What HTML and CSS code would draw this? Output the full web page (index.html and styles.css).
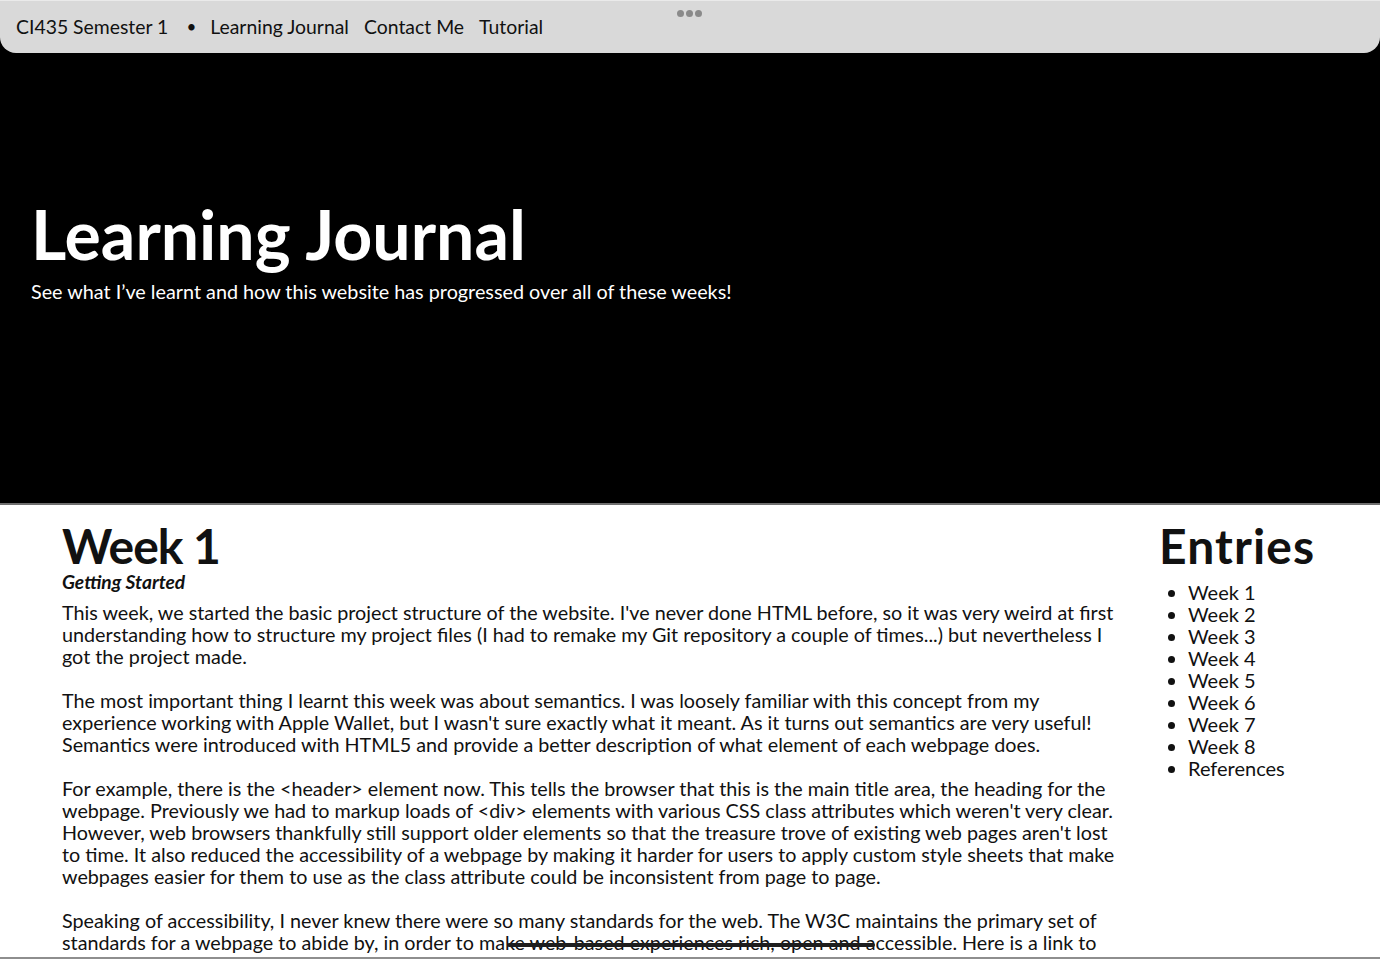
FILE: index.html
```html
<!DOCTYPE html>
<html lang="en">
<head>
<meta charset="utf-8">
<title>Learning Journal</title>
<link rel="stylesheet" href="styles.css">
</head>
<body>
<div class="frame">
  <header class="hero">
    <nav class="topbar">
      <span class="site">CI435 Semester 1</span>
      <span class="dot">&#8226;</span>
      <a href="#">Learning Journal</a>
      <a href="#">Contact Me</a>
      <a href="#">Tutorial</a>
      <span class="handle"><i></i><i></i><i></i></span>
    </nav>
    <div class="hero-text">
      <h1>Learning Journal</h1>
      <p>See what I’ve learnt and how this website has progressed over all of these weeks!</p>
    </div>
  </header>
  <div class="content">
    <main class="entry">
      <h2>Week 1</h2>
      <h3>Getting Started</h3>
      <p>This week, we started the basic project structure of the website. I've never done HTML before, so it was very weird at first understanding how to structure my project files (I had to remake my Git repository a couple of times...) but nevertheless I got the project made.</p>
      <p>The most important thing I learnt this week was about semantics. I was loosely familiar with this concept from my experience working with Apple Wallet, but I wasn't sure exactly what it meant. As it turns out semantics are very useful! Semantics were introduced with HTML5 and provide a better description of what element of each webpage does.</p>
      <p>For example, there is the &lt;header&gt; element now. This tells the browser that this is the main title area, the heading for the webpage. Previously we had to markup loads of &lt;div&gt; elements with various CSS class attributes which weren't very clear. However, web browsers thankfully still support older elements so that the treasure trove of existing web pages aren't lost to time. It also reduced the accessibility of a webpage by making it harder for users to apply custom style sheets that make webpages easier for them to use as the class attribute could be inconsistent from page to page.</p>
      <p>Speaking of accessibility, I never knew there were so many standards for the web. The W3C maintains the primary set of standards for a webpage to abide by, in order to make web-based experiences rich, open and accessible. Here is a link to their website.</p>
    </main>
    <aside class="entries">
      <h2>Entries</h2>
      <ul>
        <li>Week 1</li>
        <li>Week 2</li>
        <li>Week 3</li>
        <li>Week 4</li>
        <li>Week 5</li>
        <li>Week 6</li>
        <li>Week 7</li>
        <li>Week 8</li>
        <li>References</li>
      </ul>
    </aside>
  </div>
  <span class="smudge"></span>
</div>
</body>
</html>
```
FILE: styles.css
```css
html, body {
  margin: 0;
  padding: 0;
  background: #fff;
}
body {
  font-family: Lato, "Open Sans", sans-serif;
  color: #111;
  overflow: hidden;
}
.frame {
  width: 1380px;
  height: 957px;
  overflow: hidden;
  border-bottom: 2px solid #8e8e8e;
  position: relative;
}
.hero {
  background: #000;
  color: #fff;
  height: 503px;
  border-bottom: 2px solid #6f6f6f;
  display: flex;
  flex-direction: column;
}
.topbar {
  background: #d9d9d9;
  height: 53px;
  flex: none;
  border-top: 1px solid #eaeaea;
  box-sizing: border-box;
  border-radius: 0 0 16px 16px;
  display: flex;
  align-items: center;
  padding: 0 0 0 16px;
  font-family: Lato, sans-serif;
  font-size: 19.4px;
  color: #111;
  position: relative;
}
.topbar a, .topbar span {
  color: #111;
  text-decoration: none;
  margin-top: -2px;
}
.topbar .dot {
  margin: -2px 14px 0 18px;
  font-size: 17px;
}
.topbar a + a {
  margin-left: 15px;
}
.handle {
  position: absolute;
  left: 677px;
  top: 11px;
  display: flex;
  gap: 2px;
}
.handle i {
  width: 7px;
  height: 7px;
  border-radius: 50%;
  background: #8a8a8a;
}
.hero-text {
  padding: 145px 31px 0;
}
.hero-text h1 {
  margin: 0;
  font-size: 68px;
  line-height: 72px;
  font-weight: 700;
}
.hero-text p {
  margin: 9px 0 0;
  font-size: 19.8px;
  line-height: 24px;
}
.content {
  display: grid;
  grid-template-columns: 1064px 1fr;
  column-gap: 35px;
  padding: 16px 0 0 62px;
}
.entry h2, .entries h2 {
  margin: 0;
  font-size: 48px;
  line-height: 50px;
  font-weight: 700;
}
.entry h2 {
  letter-spacing: -1px;
}
.entries h2 {
  letter-spacing: 1.1px;
  margin-left: -2px;
}
.entry h3 {
  margin: 0 0 9px;
  font-size: 19.2px;
  line-height: 22px;
  font-style: italic;
  font-weight: 700;
}
.entry p {
  margin: 0 0 22px;
  font-size: 19.75px;
  line-height: 22px;
}
.entries ul {
  margin: 10px 0 0;
  padding: 0 0 0 27px;
  font-size: 20px;
  line-height: 22px;
}
.smudge {
  position: absolute;
  left: 507px;
  top: 943px;
  width: 368px;
  height: 4px;
  border-radius: 2px;
  background: #1e1e1e;
}
```
